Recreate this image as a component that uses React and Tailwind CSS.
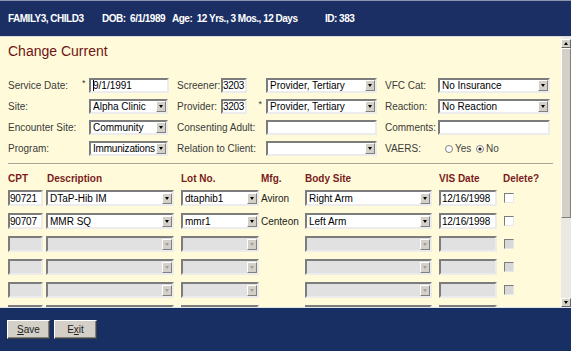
import React from "react";

const sunken =
  "border-2 border-t-[#7c7c7c] border-l-[#7c7c7c] border-r-[#ececec] border-b-[#ececec]";

function Input({ className = "", value = "", disabled, caret }) {
  return (
    <div
      className={`${sunken} ${disabled ? "bg-[#e1e1e1]" : "bg-white"} h-full flex items-center overflow-hidden whitespace-nowrap text-[10px] text-black ${className}`}
    >
      {caret && <span className="w-px h-[11px] bg-black -mr-px" />}
      {value}
    </div>
  );
}

function Select({ className = "", value = "", disabled }) {
  return (
    <div
      className={`${sunken} ${disabled ? "bg-[#e1e1e1]" : "bg-white"} h-full flex items-center pl-[2px] overflow-hidden whitespace-nowrap text-[10px] text-black ${className}`}
    >
      <span className="flex-1 overflow-hidden">{value}</span>
      <div className="w-[10px] h-[11px] shrink-0 bg-[#d4d0c8] border border-t-white border-l-white border-r-[#808080] border-b-[#808080] flex items-center justify-center">
        <div
          className={`w-0 h-0 border-x-[2px] border-t-[3px] border-x-transparent ${disabled ? "border-t-[#a0a0a0]" : "border-t-black"}`}
        />
      </div>
    </div>
  );
}

function Check({ disabled }) {
  return (
    <div
      className={`w-[10px] h-[10px] ${disabled ? "bg-[#d8d8d8]" : "bg-white"} border border-t-[#7c7c7c] border-l-[#7c7c7c] border-r-[#e8e8e8] border-b-[#e8e8e8]`}
    />
  );
}

function Radio({ checked }) {
  return (
    <svg width="8" height="8" viewBox="0 0 8 8" className="shrink-0">
      <circle cx="4" cy="4" r="3.5" fill="white" stroke="#808080" strokeWidth="1" />
      {checked && <circle cx="4" cy="4" r="1.6" fill="#222" />}
    </svg>
  );
}

function Star() {
  return <span className="text-[9px] leading-none self-start mt-[1px]">*</span>;
}

const rows = [
  { cpt: "90721", desc: "DTaP-Hib IM", lot: "dtaphib1", mfg: "Aviron", site: "Right Arm", vis: "12/16/1998" },
  { cpt: "90707", desc: "MMR SQ", lot: "mmr1", mfg: "Centeon", site: "Left Arm", vis: "12/16/1998" },
  null,
  null,
  null,
  null,
];

export default function App() {
  return (
    <div className="w-[571px] h-[351px] flex flex-col overflow-hidden bg-[#fffbda] font-['Liberation_Sans',Arial,sans-serif]">
      {/* Patient banner */}
      <header className="h-[37px] shrink-0 bg-[#1b2f64] border-t border-t-[#8c95ad] border-b border-b-[#d9dbe2] flex items-center pl-[8px] text-white text-[10px] font-bold tracking-[-0.5px]">
        <span className="w-[94px]">FAMILY3, CHILD3</span>
        <span className="w-[70px]">DOB:&nbsp; 6/1/1989</span>
        <span className="w-[153px]">Age:&nbsp; 12 Yrs., 3 Mos., 12 Days</span>
        <span>ID: 383</span>
      </header>

      <div className="flex-1 flex min-h-0">
        <main className="flex-1 overflow-hidden pl-[8px] pt-[6px] text-[10px] text-[#3a3a3a]">
          <h1 className="text-[14px] leading-[16px] text-[#6e1414]">Change Current</h1>

          {/* Encounter form */}
          <div className="mt-[19px] flex flex-col gap-[6px]">
            <div className="h-[15px] flex items-center">
              <span className="w-[74px]">Service Date:</span>
              <span className="w-[7px] flex h-full"><Star /></span>
              <Input className="w-[80px] px-[2px]" value="9/1/1991" caret />
              <div className="ml-[8px] w-[89px] h-full flex items-center">
                <span className="w-[44px]">Screener:</span>
                <Input className="w-[26px] tracking-[-0.3px]" value="3203" />
              </div>
              <Select className="w-[111px]" value="Provider, Tertiary" />
              <span className="ml-[8px] w-[53px]">VFC Cat:</span>
              <Select className="w-[112px]" value="No Insurance" />
            </div>

            <div className="h-[15px] flex items-center">
              <span className="w-[81px]">Site:</span>
              <Select className="w-[79px]" value="Alpha Clinic" />
              <div className="ml-[9px] w-[89px] h-full flex items-center">
                <span className="w-[44px]">Provider:</span>
                <Input className="w-[26px] tracking-[-0.3px]" value="3203" />
                <span className="w-[19px] h-full flex justify-end pr-[4px]"><Star /></span>
              </div>
              <Select className="w-[111px]" value="Provider, Tertiary" />
              <span className="ml-[8px] w-[53px]">Reaction:</span>
              <Select className="w-[112px]" value="No Reaction" />
            </div>

            <div className="h-[15px] flex items-center">
              <span className="w-[81px]">Encounter Site:</span>
              <Select className="w-[79px]" value="Community" />
              <span className="ml-[9px] w-[89px]">Consenting Adult:</span>
              <Input className="w-[111px]" />
              <span className="ml-[8px] w-[53px]">Comments:</span>
              <Input className="w-[112px]" />
            </div>

            <div className="h-[15px] flex items-center">
              <span className="w-[81px]">Program:</span>
              <Select className="w-[79px] tracking-[-0.2px]" value="Immunizations" />
              <span className="ml-[9px] w-[89px]">Relation to Client:</span>
              <Select className="w-[111px]" />
              <span className="ml-[8px] w-[53px]">VAERS:</span>
              <div className="flex items-center pl-[7px] text-[#444]">
                <Radio />
                <span className="ml-[2px] w-[21px]">Yes</span>
                <Radio checked />
                <span className="ml-[2px]">No</span>
              </div>
            </div>
          </div>

          <div className="mt-[7px] w-[545px] h-[2px] border-t border-t-[#b0a584] border-b border-b-[#fffef2]" />

          {/* Vaccine table */}
          <div className="mt-[6px] h-[14px] flex items-center font-bold text-[#7a1c1c]">
            <span className="w-[39px]">CPT</span>
            <span className="w-[134px]">Description</span>
            <span className="w-[80px]">Lot No.</span>
            <span className="w-[44px]">Mfg.</span>
            <span className="w-[134px]">Body Site</span>
            <span className="w-[64px]">VIS Date</span>
            <span>Delete?</span>
          </div>

          <div className="mt-[5px] flex flex-col gap-[7px]">
            {rows.map((r, i) => (
              <div key={i} className="h-[16px] flex items-center shrink-0">
                <Input className="w-[35px] tracking-[-0.2px]" value={r ? r.cpt : ""} disabled={!r} />
                <Select className="ml-[3px] w-[128px]" value={r ? r.desc : ""} disabled={!r} />
                <Select className="ml-[7px] w-[78px]" value={r ? r.lot : ""} disabled={!r} />
                <span className="w-[46px] pl-[2px] text-[#222] whitespace-nowrap">{r ? r.mfg : ""}</span>
                <Select className="w-[127px]" value={r ? r.site : ""} disabled={!r} />
                <Input className="ml-[7px] w-[58px] px-[1px] tracking-[-0.2px]" value={r ? r.vis : ""} disabled={!r} />
                <div className="ml-[7px]">
                  <Check disabled={!r} />
                </div>
              </div>
            ))}
          </div>
        </main>

        {/* Scrollbar */}
        <div className="w-[10px] shrink-0 flex flex-col pt-[2px] bg-[#ebe9e3]">
          <div className="h-[9px] bg-[#d4d0c8] border border-t-white border-l-white border-r-[#666] border-b-[#666] flex items-center justify-center">
            <div className="w-0 h-0 border-x-[2px] border-b-[3px] border-x-transparent border-b-black" />
          </div>
          <div className="h-[170px] bg-[#d4d0c8] border border-t-white border-l-white border-r-[#808080] border-b-[#808080]" />
          <div className="flex-1" />
          <div className="h-[9px] bg-[#d4d0c8] border border-t-white border-l-white border-r-[#666] border-b-[#666] flex items-center justify-center">
            <div className="w-0 h-0 border-x-[2px] border-t-[3px] border-x-transparent border-t-black" />
          </div>
        </div>
      </div>

      {/* Footer actions */}
      <footer className="h-[44px] shrink-0 bg-[#182f63] border-t border-t-[#dfe3ec] flex items-start gap-[4px] pl-[7px] pt-[12px]">
        <button className="w-[43px] h-[19px] bg-[#d4d0c8] border border-t-white border-l-white border-r-[#404040] border-b-[#404040] shadow-[inset_-1px_-1px_0_#808080] text-[10px] text-[#222]">
          <span className="underline">S</span>ave
        </button>
        <button className="w-[43px] h-[19px] bg-[#d4d0c8] border border-t-white border-l-white border-r-[#404040] border-b-[#404040] shadow-[inset_-1px_-1px_0_#808080] text-[10px] text-[#222]">
          E<span className="underline">x</span>it
        </button>
      </footer>
    </div>
  );
}
